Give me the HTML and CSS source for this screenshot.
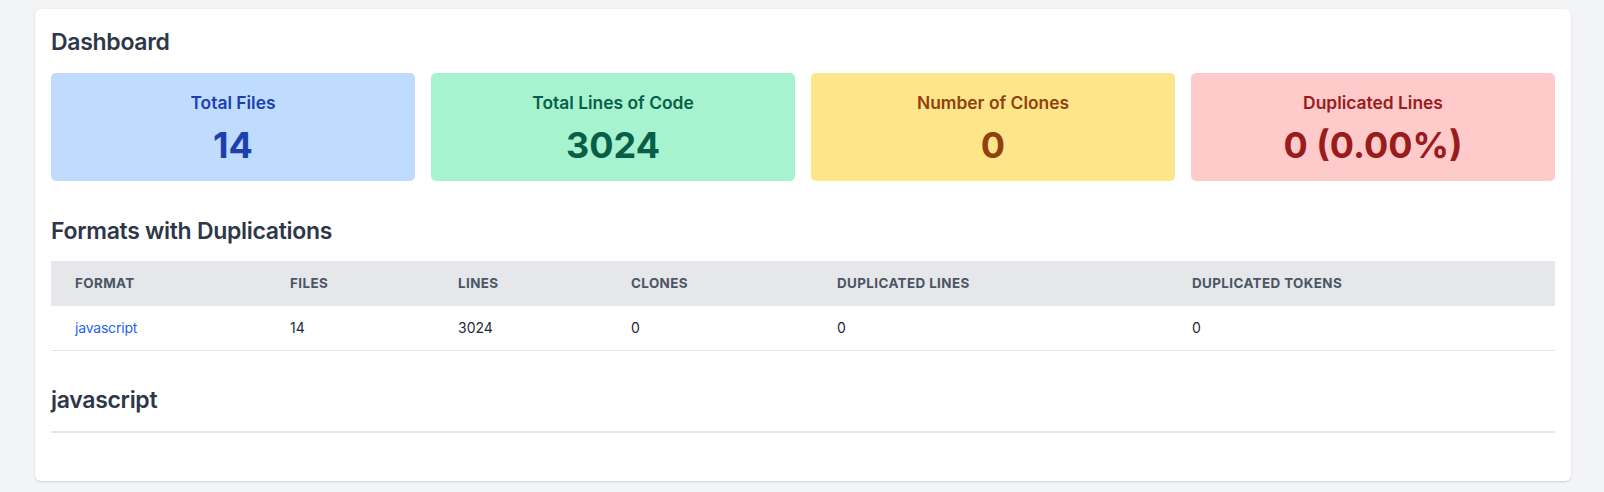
FILE: index.html
```html
<!DOCTYPE html>
<html lang="en">
<head>
<meta charset="utf-8">
<title>Dashboard</title>
<link rel="stylesheet" href="styles.css">
</head>
<body>
<div class="page">
  <main class="card">
    <h1 class="heading">Dashboard</h1>
    <section class="stats">
      <div class="stat stat-blue">
        <div class="stat-label">Total Files</div>
        <div class="stat-value">14</div>
      </div>
      <div class="stat stat-green">
        <div class="stat-label">Total Lines of Code</div>
        <div class="stat-value">3024</div>
      </div>
      <div class="stat stat-yellow">
        <div class="stat-label">Number of Clones</div>
        <div class="stat-value">0</div>
      </div>
      <div class="stat stat-red">
        <div class="stat-label">Duplicated Lines</div>
        <div class="stat-value">0 (0.00%)</div>
      </div>
    </section>

    <h2 class="heading heading-section">Formats with Duplications</h2>
    <table class="formats">
      <colgroup>
        <col class="col-format">
        <col class="col-files">
        <col class="col-lines">
        <col class="col-clones">
        <col class="col-duplines">
        <col class="col-duptokens">
      </colgroup>
      <thead>
        <tr>
          <th>Format</th>
          <th>Files</th>
          <th>Lines</th>
          <th>Clones</th>
          <th>Duplicated Lines</th>
          <th>Duplicated Tokens</th>
        </tr>
      </thead>
      <tbody>
        <tr>
          <td><a class="format-link" href="#javascript">javascript</a></td>
          <td>14</td>
          <td>3024</td>
          <td>0</td>
          <td>0</td>
          <td>0</td>
        </tr>
      </tbody>
    </table>

    <section class="format-section" id="javascript">
      <h2 class="heading heading-format">javascript</h2>
    </section>
  </main>
</div>
</body>
</html>
```

FILE: styles.css
```css
* {
  box-sizing: border-box;
}

html, body {
  margin: 0;
  padding: 0;
}

body {
  background: #f3f4f6;
  font-family: Inter, "Noto Sans", "Liberation Sans", sans-serif;
  color: #111827;
}

.page {
  padding: 9px 0 12px 35px;
}

.card {
  width: 1536px;
  background: #ffffff;
  border-radius: 6px;
  box-shadow: 0 1px 3px rgba(0, 0, 0, 0.10), 0 1px 2px rgba(0, 0, 0, 0.06);
  padding: 17px 16px 48px;
}

.heading {
  margin: 0;
  font-size: 23px;
  line-height: 32px;
  font-weight: 600;
  color: #2d3748;
  letter-spacing: -0.3px;
}

.stats {
  display: grid;
  grid-template-columns: repeat(4, 1fr);
  gap: 16px;
  margin-top: 15px;
}

.stat {
  border-radius: 5px;
  padding: 16px;
  text-align: center;
}

.stat-label {
  font-size: 17.4px;
  line-height: 28px;
  font-weight: 600;
}

.stat-value {
  margin-top: 8px;
  font-size: 36px;
  line-height: 40px;
  font-weight: 700;
}

.stat-blue { background: #bfdbfe; color: #1e40af; }
.stat-green { background: #a7f3d0; color: #065f46; }
.stat-yellow { background: #fde68a; color: #92400e; }
.stat-red { background: #fecaca; color: #991b1b; }

.heading-section {
  margin-top: 34px;
}

.formats {
  width: 100%;
  margin-top: 14px;
  border-collapse: collapse;
  table-layout: fixed;
}

.col-format { width: 215px; }
.col-files { width: 168px; }
.col-lines { width: 173px; }
.col-clones { width: 206px; }
.col-duplines { width: 355px; }
.col-duptokens { width: auto; }

.formats th {
  background: #e5e7eb;
  text-align: left;
  padding: 12px 24px;
  font-size: 13.4px;
  line-height: 21px;
  font-weight: 700;
  text-transform: uppercase;
  letter-spacing: 0.4px;
  color: #4b5563;
}

.formats td {
  padding: 12px 24px;
  font-size: 14px;
  line-height: 20px;
  color: #1f2937;
  border-bottom: 1px solid #e5e7eb;
  white-space: nowrap;
}

.format-link {
  color: #2563eb;
  text-decoration: none;
  letter-spacing: -0.2px;
}

.format-section {
  margin-top: 33px;
}

.heading-format {
  padding-bottom: 15px;
  border-bottom: 2px solid #e5e7eb;
}
```
